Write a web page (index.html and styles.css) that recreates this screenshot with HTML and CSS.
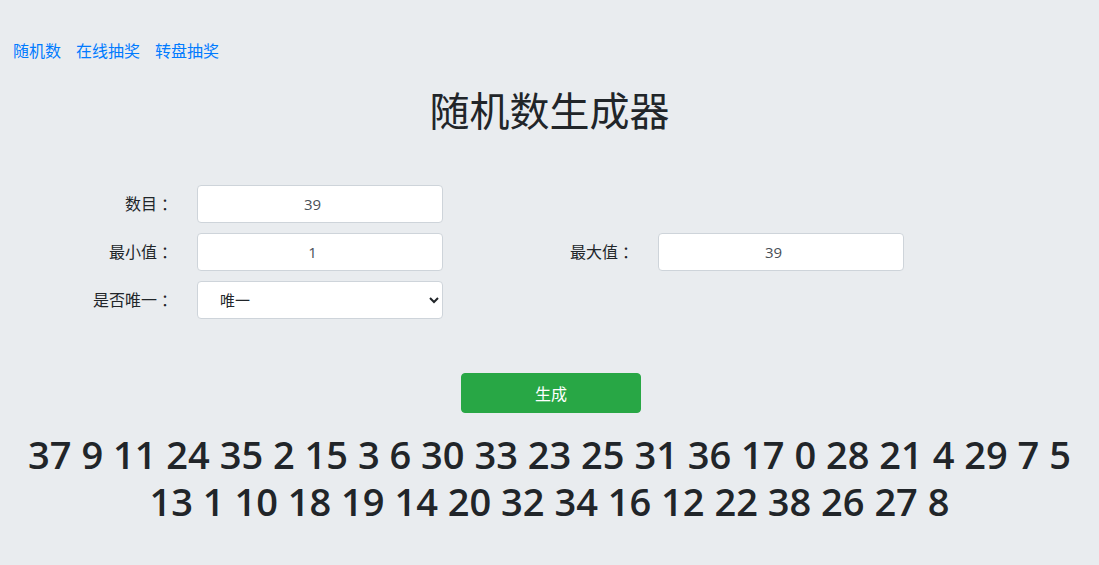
FILE: index.html
```html
<!DOCTYPE html>
<html lang="zh-CN">
<head>
<meta charset="utf-8">
<title>随机数生成器</title>
<link rel="stylesheet" href="styles.css">
</head>
<body>
<nav class="nav">
  <a href="#">随机数</a>
  <a href="#">在线抽奖</a>
  <a href="#">转盘抽奖</a>
</nav>
<h1 class="title">随机数生成器</h1>
<form class="form">
  <label class="label">数目<span class="colon">：</span></label>
  <input class="field" type="number" value="39">
  <span class="empty"></span>
  <span class="empty"></span>

  <label class="label">最小值<span class="colon">：</span></label>
  <input class="field" type="number" value="1">
  <label class="label">最大值<span class="colon">：</span></label>
  <input class="field" type="number" value="39">

  <label class="label">是否唯一<span class="colon">：</span></label>
  <select class="field select">
    <option>唯一</option>
    <option>不唯一</option>
  </select>
</form>
<div class="actions">
  <button class="btn" type="button">生成</button>
</div>
<h1 class="result">37 9 11 24 35 2 15 3 6 30 33 23 25 31 36 17 0 28 21 4 29 7 5 13 1 10 18 19 14 20 32 34 16 12 22 38 26 27 8</h1>
</body>
</html>
```

FILE: styles.css
```css
html, body {
  margin: 0;
  padding: 0;
}
body {
  background: #e9ecef;
  color: #212529;
  font-family: "Open Sans", "Noto Sans CJK SC", sans-serif;
  font-size: 16px;
  line-height: 1.5;
}
.nav {
  padding: 39px 0 0 13px;
  display: flex;
  gap: 15px;
}
.nav a {
  color: #007bff;
  text-decoration: none;
  font-size: 16px;
  line-height: 24px;
}
.title {
  margin: 24px 0 0;
  text-align: center;
  font-size: 40px;
  font-weight: 400;
  line-height: 48px;
}
.form {
  margin-top: 50px;
  display: grid;
  grid-template-columns: 197px 246px 215px 246px;
  grid-auto-rows: 38px;
  row-gap: 10px;
}
.label {
  text-align: right;
  padding-right: 20px;
  font-size: 16px;
  line-height: 38px;
}
.colon {
  margin-left: 4px;
}
.field {
  box-sizing: border-box;
  height: 38px;
  width: 246px;
  border: 1px solid #ced4da;
  border-radius: 4px;
  background: #fff;
  color: #495057;
  font-family: "Open Sans", "Noto Sans CJK SC", sans-serif;
  font-size: 15px;
  text-align: center;
  padding: 6px 12px;
  margin: 0;
}
.select {
  text-align: left;
  padding-left: 18px;
  color: #212529;
}
.actions {
  margin-top: 54px;
  display: flex;
  justify-content: center;
  padding-left: 3px;
}
.btn {
  width: 180px;
  height: 40px;
  border: 1px solid #28a745;
  background: #28a745;
  color: #fff;
  border-radius: 4px;
  font-family: "Open Sans", "Noto Sans CJK SC", sans-serif;
  font-size: 16px;
}
.result {
  margin: 18px 20px 0;
  text-align: center;
  font-size: 38px;
  font-weight: 600;
  line-height: 47px;
}
```
